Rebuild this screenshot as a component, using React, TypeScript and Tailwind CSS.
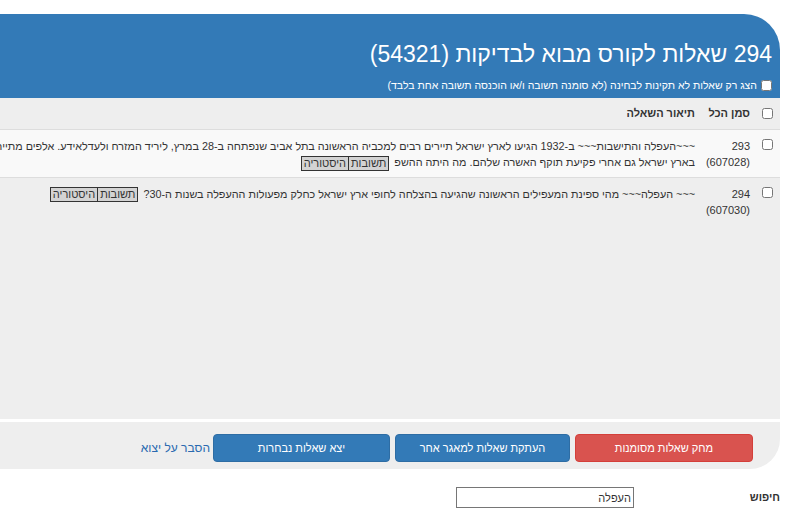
import React from 'react';

/**
 * Question bank list for a course (RTL)
 */

const rows = [
  {
    id: 293,
    ref: 607028,
    bg: 'bg-[#f9f9f9] border-b border-[#dddddd]',
    lines: [
      '~~~העפלה והתישבות~~~ ב-1932 הגיעו לארץ ישראל תיירים רבים למכביה הראשונה בתל אביב שנפתחה ב-28 במרץ, ליריד המזרח ולעדלאידע. אלפים מתיירים אלה נשארו',
      'בארץ ישראל גם אחרי פקיעת תוקף האשרה שלהם. מה היתה ההשפ',
    ],
  },
  {
    id: 294,
    ref: 607030,
    bg: 'bg-[#eeeeee]',
    lines: [
      '~~~ העפלה~~~ מהי ספינת המעפילים הראשונה שהגיעה בהצלחה לחופי ארץ ישראל כחלק מפעולות ההעפלה בשנות ה-30?',
    ],
  },
];

function Box() {
  return <input type="checkbox" className="w-[11px] h-[11px] m-0 align-middle" />;
}

function SmallButtons() {
  return (
    <span className="inline-flex mr-[5px] align-middle">
      <button className="h-[15px] px-[2px] bg-[#d3d3d3] border border-[#333] text-[11px] leading-[13px] text-[#333]">
        תשובות
      </button>
      <button className="h-[15px] px-[2px] bg-[#d3d3d3] border border-[#333] border-r-0 text-[11px] leading-[13px] text-[#333]">
        היסטוריה
      </button>
    </span>
  );
}

export default function App() {
  return (
    <div
      dir="rtl"
      className="w-[790px] h-[518px] overflow-hidden bg-white pt-[14px] text-[#333] font-['Liberation_Sans',Arial,sans-serif]"
    >
      <div className="w-[1400px] mr-[10px]">
        {/* Header */}
        <div className="bg-[#337ab7] rounded-tr-[36px] text-white pr-[8px] pt-[27px] pb-[6px]">
          <h1 className="text-[23px] leading-[26px] font-normal whitespace-nowrap">
            294 שאלות לקורס מבוא לבדיקות (54321)
          </h1>
          <label className="mt-[11px] flex items-center gap-[4px] text-[10.5px] leading-[14px] whitespace-nowrap">
            <Box />
            הצג רק שאלות לא תקינות לבחינה (לא סומנה תשובה ו/או הוכנסה תשובה אחת בלבד)
          </label>
        </div>

        {/* Table */}
        <div className="h-[321px] bg-[#eeeeee] text-[11px]">
          <div className="flex items-center h-[32px] border-b border-[#dddddd] font-bold">
            <div className="w-[30px] pr-[7px] flex items-center">
              <Box />
            </div>
            <div className="w-[55px]">סמן הכל</div>
            <div className="flex-1">תיאור השאלה</div>
          </div>

          {rows.map((row) => (
            <div
              key={row.id}
              className={`flex items-start pt-[8px] pb-[6px] leading-[16px] ${row.bg}`}
            >
              <div className="w-[30px] pr-[7px] pt-[1px] flex items-center">
                <Box />
              </div>
              <div className="w-[55px]">
                {row.id}
                <br />({row.ref})
              </div>
              <div className="flex-1 text-[10.8px]">
                {row.lines.map((line, i) => (
                  <div key={i} className="whitespace-nowrap">
                    {line}
                    {i === row.lines.length - 1 && <SmallButtons />}
                  </div>
                ))}
              </div>
            </div>
          ))}
        </div>

        {/* Footer actions */}
        <div className="mt-[3px] h-[47px] bg-[#eeeeee] rounded-br-[30px] flex items-start gap-[5px] pr-[27px] pt-[12px] text-[11px]">
          <button className="w-[178px] h-[28px] bg-[#d9534f] border border-[#d43f3a] rounded-[4px] text-white">
            מחק שאלות מסומנות
          </button>
          <button className="w-[175px] h-[28px] bg-[#337ab7] border border-[#2e6da4] rounded-[4px] text-white">
            העתקת שאלות למאגר אחר
          </button>
          <button className="w-[177px] h-[28px] bg-[#337ab7] border border-[#2e6da4] rounded-[4px] text-white">
            יצא שאלות נבחרות
          </button>
          <a className="text-[12px] leading-[28px] text-[#2a6ab0] -mr-[2px]">הסבר על יצוא</a>
        </div>
      </div>

      {/* Search */}
      <div className="mt-[18px] mr-[10px] flex items-center text-[11px]">
        <div className="w-[146px] font-bold">חיפוש</div>
        <input
          defaultValue="העפלה"
          className="w-[178px] h-[21px] border border-[#767676] px-[2px] text-[11px] text-[#333] outline-none"
        />
      </div>
    </div>
  );
}
